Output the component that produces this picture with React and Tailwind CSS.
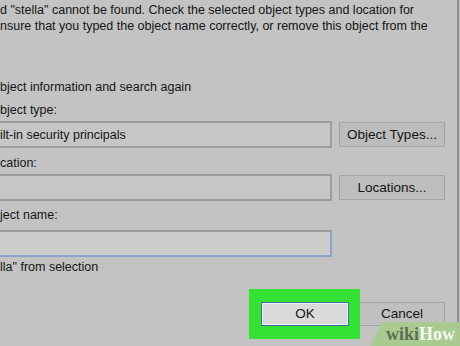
export default function App() {
  return (
    <div className="relative flex h-[346px] w-[460px] overflow-hidden bg-[#c3c3c3] font-['Liberation_Sans',Arial,sans-serif] text-[12.5px] leading-4 text-[#151515]">
      <div className="flex w-[457px] flex-col">
        <div className="pt-[2px] whitespace-nowrap">
          <p>d "stella" cannot be found. Check the selected object types and location for</p>
          <p>nsure that you typed the object name correctly, or remove this object from the</p>
        </div>
        <p className="mt-[45px]">bject information and search again</p>
        <p className="mt-[7px]">bject type:</p>
        <div className="mt-[3px] flex items-center gap-[7px]">
          <div className="flex h-[27px] w-[332px] items-center border-2 border-l-0 border-[#9c9c9c] bg-[#c6c6c6]">
            ilt-in security principals
          </div>
          <div className="flex h-[25px] w-[106px] items-center justify-center border border-[#a4a4a4] bg-[#bdbdbd] text-[13.5px]">
            Object Types...
          </div>
        </div>
        <p className="mt-[7px]">cation:</p>
        <div className="mt-[3px] flex items-center gap-[7px]">
          <div className="h-[27px] w-[332px] border-2 border-l-0 border-[#9c9c9c] bg-[#c6c6c6]" />
          <div className="flex h-[25px] w-[106px] items-center justify-center border border-[#a4a4a4] bg-[#bdbdbd] text-[13.5px]">
            Locations...
          </div>
        </div>
        <p className="mt-[6px]">ject name:</p>
        <div className="mt-[7px] h-[27px] w-[332px] border-2 border-l-0 border-[#9c9c9c] border-b-[#8aa2cc] border-r-[#8aa2cc] bg-[#cdcdcd]" />
        <p className="mt-[2px]">lla" from selection</p>
        <div className="mt-[14px] flex items-start pl-[249px]">
          <div className="h-[50px] w-[111px] bg-[#33e233] pl-[12px] pt-[13px]">
            <div className="flex h-[24px] w-[88px] items-center justify-center border border-[#3f6f9f] bg-[#dadada] text-[13.5px] shadow-[inset_0_0_0_1px_#eef4fa]">
              OK
            </div>
          </div>
          <div className="mt-[13px] flex h-[24px] w-[85px] items-center justify-center border border-l-0 border-[#a4a4a4] bg-[#c0c0c0] text-[13.5px]">
            Cancel
          </div>
        </div>
      </div>
      <div className="w-[2px] bg-[#8e8e98]" />
      <div className="w-[1px] bg-[#c6c6c6]" />
      <div className="absolute bottom-0 right-0 flex h-[24px] w-[90px] items-center justify-end pr-[5px] [clip-path:polygon(14%_0,100%_0,100%_100%,0_100%)] bg-[#a6cc8c]/90 font-['Liberation_Serif',serif] text-[18px] font-bold">
        <span className="text-[#5d6d55]">wiki</span>
        <span className="text-[#f4f8ee]">How</span>
      </div>
    </div>
  )
}
